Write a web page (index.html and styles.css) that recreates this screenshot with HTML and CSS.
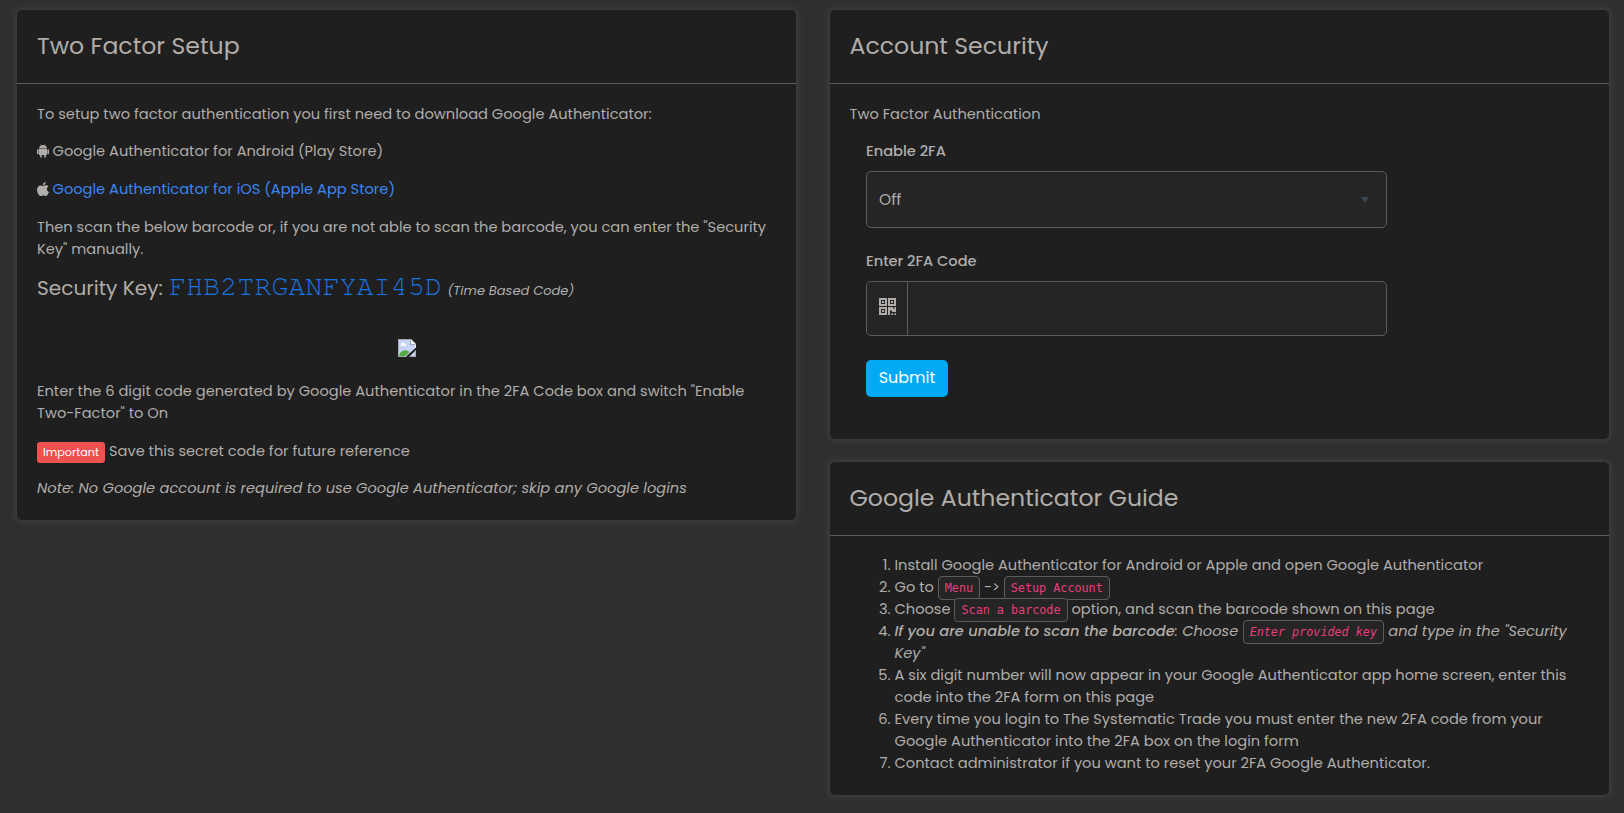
FILE: index.html
```html
<!DOCTYPE html>
<html lang="en">
<head>
<meta charset="utf-8">
<title>Two Factor Setup</title>
<link rel="stylesheet" href="styles.css">
</head>
<body>
<main class="page">
  <section class="card setup">
    <header class="card-head"><h2>Two Factor Setup</h2></header>
    <div class="card-body">
      <p>To setup two factor authentication you first need to download Google Authenticator:</p>
      <p class="store"><svg class="ico" viewBox="0 0 12 14"><path d="M2 5h8v6H8.800v2a.8.8 0 0 1-1.600 0v-2H4.800v2a.8.8 0 0 1-1.600 0v-2H2zM0 6a.8.8 0 0 1 1.600 0v3.500a.8.8 0 0 1-1.600 0zM10.400 6a.8.8 0 0 1 1.600 0v3.500a.8.8 0 0 1-1.600 0zM2 4.500C2 3 2.800 2 4 1.400L3.300.2 3.600 0l.8 1.200a4.500 4.500 0 0 1 3.200 0L8.400 0l.3.2L8 1.400C9.200 2 10 3 10 4.500z"/></svg>Google Authenticator for Android (Play Store)</p>
      <p class="store"><svg class="ico" viewBox="0 0 12 14"><path d="M8.600 0c.1 1.700-1.100 3.200-2.700 3.200C5.800 1.600 7.100.2 8.600 0zM6.200 4c.6 0 1.400-.7 2.700-.7 1.100 0 2 .5 2.600 1.300-2.300 1.400-2 4.500.5 5.400-.6 1.700-1.900 4-3.200 4-.9 0-1.400-.6-2.500-.6s-1.600.6-2.500.6C2 14 0 10.600 0 7.700c0-2.700 1.700-4.300 3.500-4.300 1.200 0 2.100.6 2.700.6z"/></svg><a href="#">Google Authenticator for iOS (Apple App Store)</a></p>
      <p>Then scan the below barcode or, if you are not able to scan the barcode, you can enter the "Security<br>Key" manually.</p>
      <div class="key">Security Key: <span class="code-key">FHB2TRGANFYAI45D</span> <em>(Time Based Code)</em></div>
      <div class="qr"><svg width="18" height="18" viewBox="0 0 18 18"><path fill="#f4f6fb" d="M0 0h13l5 5v13H0z"/><path fill="#c6d5f5" d="M1 1h11v5h5v11H1z"/><path fill="#fff" d="M3 6a2 2 0 0 1 4-1 1.500 1.500 0 0 1 1 2H3z"/><path fill="#55aa44" d="M1 17c1-5 6-7.500 10.500-4l-4 4z"/><path fill="#a6a9ad" d="M0 0h13v1H1v16h6v1H0zM12 1h1v4h4l1 1h-6zM11 18v-1h6v-5h1v6z"/><path fill="#1f1f1f" d="M18 8.500v2.500L11 18H7.500z"/></svg></div>
      <p>Enter the 6 digit code generated by Google Authenticator in the 2FA Code box and switch "Enable<br>Two-Factor" to On</p>
      <p class="save"><span class="badge">Important</span> Save this secret code for future reference</p>
      <p><em>Note: No Google account is required to use Google Authenticator; skip any Google logins</em></p>
    </div>
  </section>
  <div class="col">
    <section class="card security">
      <header class="card-head"><h2>Account Security</h2></header>
      <div class="card-body">
        <p>Two Factor Authentication</p>
        <form class="form">
          <label>Enable 2FA</label>
          <div class="select">Off<i class="caret"></i></div>
          <label>Enter 2FA Code</label>
          <div class="group"><span class="addon"><svg width="17" height="17" viewBox="0 0 17 17"><path fill-rule="evenodd" d="M0 0h8v8H0zM2 2v4h4V2zM3 3h2v2H3zM9 0h8v8H9zM11 2v4h4V2zM12 3h2v2h-2zM0 9h8v8H0zM2 11v4h4v-4zM3 12h2v2H3zM9 9h5v1.500h1.500V9H17v5h-4v-1.500h-2V17H9zM12.300 15.200H14V17h-1.700zM15.300 15.200H17V17h-1.700z"/></svg></span><input class="code-input" type="text" aria-label="2FA code"></div>
          <button type="button" class="submit">Submit</button>
        </form>
      </div>
    </section>
    <section class="card guide">
      <header class="card-head"><h2>Google Authenticator Guide</h2></header>
      <div class="card-body">
        <ol>
          <li>Install Google Authenticator for Android or Apple and open Google Authenticator</li>
          <li>Go to <code>Menu</code> -&gt; <code>Setup Account</code></li>
          <li>Choose <code>Scan a barcode</code> option, and scan the barcode shown on this page</li>
          <li><em><b>If you are unable to scan the barcode</b>: Choose <code>Enter provided key</code> and type in the "Security<br>Key"</em></li>
          <li>A six digit number will now appear in your Google Authenticator app home screen, enter this<br>code into the 2FA form on this page</li>
          <li>Every time you login to The Systematic Trade you must enter the new 2FA code from your<br>Google Authenticator into the 2FA box on the login form</li>
          <li>Contact administrator if you want to reset your 2FA Google Authenticator.</li>
        </ol>
      </div>
    </section>
  </div>
</main>
</body>
</html>
```
FILE: styles.css
```css
* { box-sizing: border-box; }
body { margin: 0; height: 813px; overflow: hidden; background: #2f2f2f; color: #b0adaa; font: 14.63px/22px Poppins, Inter, sans-serif; }
.page { display: grid; grid-template-columns: 779px 779px; column-gap: 34px; align-items: start; padding: 10px 15px 0 17px; white-space: nowrap; }
.col { display: flex; flex-direction: column; gap: 23px; }
.card { background: #1f1f1f; border-radius: 5px; box-shadow: 0 0 7px 1px #454545; }
.setup { height: 510px; }
.security { height: 429px; }
.guide { height: 333px; }
.card-head { height: 74px; padding: 20px 20px 0; border-bottom: 1px solid #5c5c5c; }
h2 { margin: 0; font-size: 23.6px; line-height: 31px; font-weight: 400; }
.card-body { padding: 19px 20px 0; }
.col .card-head, .col .card-body { padding-left: 19.5px; }
.guide .card-body { padding-top: 18px; }
p { margin: 0 0 15px; }
.store { margin-bottom: 16px; }
.ico { width: 12px; height: 14px; margin-right: 3.5px; vertical-align: -2px; fill: currentColor; }
a { color: #3c86f2; text-decoration: none; }
.key { margin-top: -2px; font-size: 20.1px; line-height: 30px; height: 30px; }
.code-key { margin-left: 1px; font-family: FreeMono, "Courier New", "Liberation Mono", monospace; font-size: 28px; letter-spacing: .25px; color: #1a74e0; line-height: 1; }
.key em { font-size: 13px; }
.qr { display: flex; justify-content: center; padding-top: 36px; height: 77px; }
.save { margin: 16px 0 14px; }
.badge { display: inline-block; height: 21px; padding: 0 6px; border-radius: 3px; background: #ee524f; color: #fff; font-size: 11.2px; line-height: 20px; }
.form { padding-left: 16.5px; width: 537.5px; }
label { display: block; font-weight: 500; }
.select { display: flex; align-items: center; justify-content: space-between; height: 57px; margin: 9px 0 22px; padding: 0 17px 0 12px; border: 1px solid #5c5c5c; border-radius: 5px; background: #252525; font-size: 15.5px; }
.caret { border: 4px solid transparent; border-top: 6px solid #3e464d; border-bottom: 0; }
.group { display: flex; height: 55px; margin: 9px 0 24px; border: 1px solid #5c5c5c; border-radius: 5px; background: #252525; }
.addon { width: 41px; padding: 16px 0 0 12px; border-right: 1px solid #5c5c5c; fill: currentColor; line-height: 0; }
.code-input { flex: 1; min-width: 0; border: 0; background: none; color: inherit; }
.submit { display: block; width: 82px; height: 37px; padding: 0 0 1px; border: 0; border-radius: 5px; background: #03a9f4; color: #fff; font: 400 16px/34px Poppins, Inter, sans-serif; }
ol { margin: 0; padding-left: 45px; }
b { font-weight: 500; }
code { padding: 4px 6px; border: 1px solid #5c5c5c; border-radius: 4px; background: #252525; color: #e83e7c; font-family: "DejaVu Sans Mono", monospace; font-size: 11.75px; line-height: 1; }
```
